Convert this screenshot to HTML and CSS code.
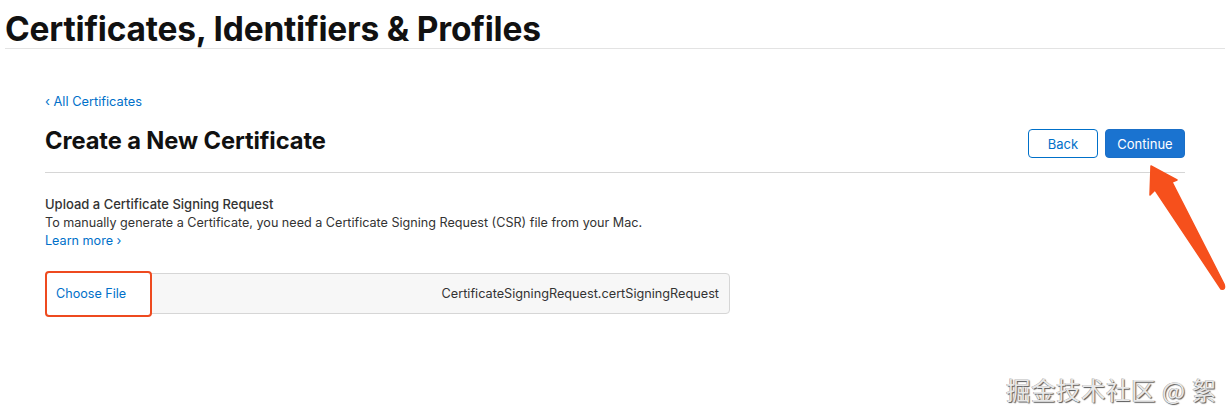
FILE: index.html
```html
<!DOCTYPE html>
<html>
<head>
<meta charset="utf-8">
<link rel="stylesheet" href="styles.css">
</head>
<body>
<header class="top">
  <h1 class="top-title">Certificates, Identifiers &amp; Profiles</h1>
</header>
<main class="main">
  <a class="back-link" href="#">‹ All Certificates</a>
  <div class="head-row">
    <h2 class="page-title">Create a New Certificate</h2>
    <div class="actions">
      <button class="btn btn-outline">Back</button>
      <button class="btn btn-primary">Continue</button>
    </div>
  </div>
  <section class="upload">
    <h3 class="upload-title">Upload a Certificate Signing Request</h3>
    <p class="upload-desc">To manually generate a Certificate, you need a Certificate Signing Request (CSR) file from your Mac.</p>
    <a class="learn" href="#">Learn more ›</a>
    <div class="file-input">
      <span class="choose">Choose File</span>
      <span class="file-name">CertificateSigningRequest.certSigningRequest</span>
    </div>
  </section>
</main>
<svg class="arrow" width="90" height="140" viewBox="0 0 90 140">
  <path d="M11 6 L37 20 L32 22 L84 124 Q86 130 81 129 L15 30 L10 35 Z" fill="#f6501c" stroke="#f6501c" stroke-width="1.5" stroke-linejoin="round"/>
</svg>
<div class="watermark">掘金技术社区 @ 絮</div>
</body>
</html>
```
FILE: styles.css
```css
* { box-sizing: border-box; }
html, body { margin: 0; padding: 0; background: #fff; }
body {
  width: 1231px;
  height: 419px;
  overflow: hidden;
  position: relative;
  font-family: Inter, "Liberation Sans", sans-serif;
  color: #1d1d1f;
}
.top {
  margin: 0 6px 0 5px;
  border-bottom: 1px solid #e3e3e3;
  height: 49px;
}
.top-title {
  margin: 0;
  padding-top: 9px;
  font-size: 33.5px;
  line-height: 40px;
  font-weight: 700;
  letter-spacing: -0.2px;
  color: #111;
}
.main {
  width: 1140px;
  margin-left: 45px;
  padding-top: 44px;
}
.back-link {
  display: block;
  font-size: 12.8px;
  line-height: 17px;
  color: #0070c9;
  text-decoration: none;
}
.head-row {
  display: flex;
  justify-content: space-between;
  align-items: flex-start;
  border-bottom: 1px solid #d6d6d6;
  padding-top: 16px;
  height: 63px;
}
.page-title {
  margin: 0;
  font-size: 23.7px;
  line-height: 30px;
  font-weight: 700;
  color: #111;
  letter-spacing: -0.1px;
}
.actions {
  display: flex;
  gap: 7px;
  padding-top: 3px;
}
.btn {
  height: 29px;
  border-radius: 4px;
  font-family: Inter, "Liberation Sans", sans-serif;
  font-size: 13px;
  padding: 0;
  cursor: pointer;
}
.btn-outline {
  width: 70px;
  background: #fff;
  border: 1px solid #0070c9;
  color: #0070c9;
}
.btn-primary {
  width: 80px;
  background: #1a73d0;
  border: 1px solid #1a6fc7;
  color: #fff;
}
.upload {
  padding-top: 22px;
}
.upload-title {
  margin: 0;
  font-size: 13px;
  line-height: 18px;
  font-weight: 500;
  color: #333;
}
.upload-desc {
  margin: 0;
  font-size: 12.6px;
  line-height: 19px;
  color: #333;
}
.learn {
  display: block;
  font-size: 12.6px;
  line-height: 18px;
  color: #0070c9;
  text-decoration: none;
}
.file-input {
  margin-top: 23px;
  width: 685px;
  height: 41px;
  display: flex;
  align-items: center;
  justify-content: space-between;
  background: #f7f7f7;
  border: 1px solid #d6d6d6;
  border-radius: 4px;
  position: relative;
  padding: 0 10px 0 0;
}
.choose {
  width: 107px;
  height: 46px;
  margin-left: -1px;
  margin-top: -2px;
  margin-bottom: -2px;
  display: flex;
  align-items: center;
  padding-left: 9px;
  font-size: 12.6px;
  color: #0070c9;
  background: #fff;
  border: 2.5px solid #ee4a1f;
  border-radius: 4px;
}
.file-name {
  font-size: 12.7px;
  color: #333;
}
.arrow {
  position: absolute;
  left: 1140px;
  top: 160px;
}
.watermark {
  position: absolute;
  left: 1006px;
  top: 375px;
  font-family: "Noto Sans CJK SC", sans-serif;
  font-size: 24.5px;
  line-height: 30px;
  color: #e8e8e8;
  text-shadow: 1px 1px 1px #555, -0.5px -0.5px 0 #999;
  letter-spacing: 0.5px;
}
```
